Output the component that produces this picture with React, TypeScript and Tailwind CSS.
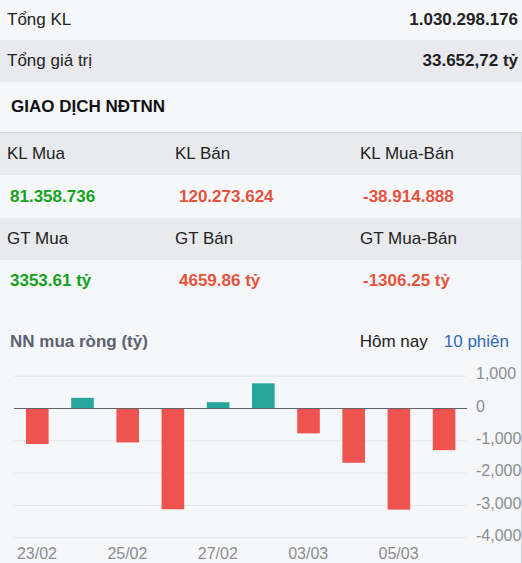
import React from 'react';

const font = { fontFamily: '"Liberation Sans", Arial, sans-serif' };

const bars = [-1100, 330, -1050, -3120, 195, 780, -770, -1680, -3130, -1290];
const xLabels = ['23/02', '25/02', '27/02', '03/03', '05/03'];
const yTicks = [1000, 0, -1000, -2000, -3000, -4000];

const ZERO = 48.5;
const SCALE = 32.3 / 1000;
const LEFT = 14;
const BAND = 45.2;

const fmt = (v: number) => (v === 0 ? '0' : v.toLocaleString('en-US'));

const NetChart = () => (
  <svg width="521" height="203" className="block">
    {yTicks.map((t) => {
      const y = ZERO - t * SCALE;
      return (
        <g key={t}>
          {t !== 0 && <line x1={LEFT} x2={466} y1={y} y2={y} stroke="#e4e6ea" strokeWidth="1" />}
          <text x={476} y={y - 1} dominantBaseline="middle" fontSize="16" fill="#8a8d93" style={font}>
            {fmt(t)}
          </text>
        </g>
      );
    })}
    {bars.map((v, i) => {
      const x = LEFT + i * BAND + 12;
      const h = Math.abs(v) * SCALE;
      const y = v >= 0 ? ZERO - h : ZERO;
      return <rect key={i} x={x} y={y} width={22.6} height={h} fill={v >= 0 ? '#26a69a' : '#ef5350'} />;
    })}
    <line x1={LEFT} x2={467} y1={ZERO} y2={ZERO} stroke="#5f6368" strokeWidth="1" />
    {xLabels.map((l, i) => (
      <text key={l} x={LEFT + i * 2 * BAND + 23} y={195} textAnchor="middle" dominantBaseline="middle" fontSize="16" fill="#8a8d93" style={font}>
        {l}
      </text>
    ))}
  </svg>
);

const Cell = ({ children, className = '' }: { children: React.ReactNode; className?: string }) => (
  <div className={`flex items-center ${className}`}>{children}</div>
);

export default function App() {
  return (
    <div className="w-[522px] h-[563px] overflow-hidden bg-[#f6f7f9] text-[#222]" style={font}>
      <div className="h-[40px] flex items-center justify-between pl-[7px] pr-[4px] text-[17px]">
        <span>Tổng KL</span>
        <span className="font-bold">1.030.298.176</span>
      </div>
      <div className="h-[42px] flex items-center justify-between pl-[7px] pr-[4px] text-[17px] bg-[#e8eaee]">
        <span>Tổng giá trị</span>
        <span className="font-bold">33.652,72 tỷ</span>
      </div>
      <div className="h-[50px] flex items-center pl-[11px] text-[17px] font-bold text-[#111]">GIAO DỊCH NĐTNN</div>

      <div className="border-t border-r border-[#cfd2d7] w-[522px]">
        <div className="grid grid-cols-[168px_185px_1fr] h-[42px] bg-[#e8eaee] pl-[7px] text-[17px]">
          <Cell>KL Mua</Cell>
          <Cell>KL Bán</Cell>
          <Cell>KL Mua-Bán</Cell>
        </div>
        <div className="grid grid-cols-[168px_185px_1fr] h-[43px] pl-[10px] text-[17px] font-bold">
          <Cell className="text-[#15a11f]">81.358.736</Cell>
          <Cell className="text-[#e5533f] pl-[1px]">120.273.624</Cell>
          <Cell className="text-[#e5533f]">-38.914.888</Cell>
        </div>
        <div className="grid grid-cols-[168px_185px_1fr] h-[42px] bg-[#e8eaee] pl-[7px] text-[17px]">
          <Cell>GT Mua</Cell>
          <Cell>GT Bán</Cell>
          <Cell>GT Mua-Bán</Cell>
        </div>
        <div className="grid grid-cols-[168px_185px_1fr] h-[42px] pl-[10px] text-[17px] font-bold">
          <Cell className="text-[#15a11f]">3353.61 tỷ</Cell>
          <Cell className="text-[#e5533f] pl-[1px]">4659.86 tỷ</Cell>
          <Cell className="text-[#e5533f]">-1306.25 tỷ</Cell>
        </div>

        <div className="flex items-center justify-between h-[58px] pt-[22px] pl-[10px] pr-[12px] text-[17px]">
          <span className="font-bold text-[#5a6170]">NN mua ròng (tỷ)</span>
          <div className="flex gap-[16px]">
            <span className="text-[#222]">Hôm nay</span>
            <span className="text-[#2e6bb8]">10 phiên</span>
          </div>
        </div>
        <NetChart />
      </div>
    </div>
  );
}
